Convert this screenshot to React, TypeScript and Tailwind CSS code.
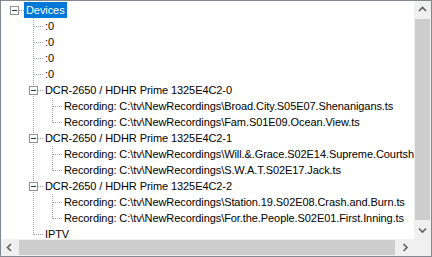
import type { ReactNode } from "react";

type Node = {
  label: string;
  children?: Node[];
  selected?: boolean;
};

const rec = (name: string): Node => ({
  label: "Recording: C:\\tv\\NewRecordings\\" + name,
});

const tree: Node = {
  label: "Devices",
  selected: true,
  children: [
    { label: ":0" },
    { label: ":0" },
    { label: ":0" },
    { label: ":0" },
    {
      label: "DCR-2650 / HDHR Prime 1325E4C2-0",
      children: [
        rec("Broad.City.S05E07.Shenanigans.ts"),
        rec("Fam.S01E09.Ocean.View.ts"),
      ],
    },
    {
      label: "DCR-2650 / HDHR Prime 1325E4C2-1",
      children: [
        rec("Will.&.Grace.S02E14.Supreme.Courtship.ts"),
        rec("S.W.A.T.S02E17.Jack.ts"),
      ],
    },
    {
      label: "DCR-2650 / HDHR Prime 1325E4C2-2",
      children: [
        rec("Station.19.S02E08.Crash.and.Burn.ts"),
        rec("For.the.People.S02E01.First.Inning.ts"),
      ],
    },
    { label: "IPTV" },
  ],
};

type Row = {
  node: Node;
  level: number;
  // for each ancestor column: does a vertical line pass through
  through: boolean[];
  isLast: boolean;
  isRoot: boolean;
};

function flatten(node: Node, level: number, through: boolean[], isLast: boolean, isRoot: boolean, out: Row[]) {
  out.push({ node, level, through, isLast, isRoot });
  const kids = node.children ?? [];
  kids.forEach((kid, i) => {
    flatten(kid, level + 1, [...through, !isLast && !isRoot], i === kids.length - 1, false, out);
  });
  return out;
}

const rows = flatten(tree, 0, [], true, true, []);

const dot = { stroke: "#a0a0a0", strokeWidth: 1, strokeDasharray: "1 1", shapeRendering: "crispEdges" as const };

// one 19x16 column of connector lines
function Cell({ kind, hasBox }: { kind: "blank" | "through" | "tee" | "elbow" | "root"; hasBox?: boolean }) {
  let lines: ReactNode = null;
  if (kind === "through") {
    lines = <line x1={9.5} y1={0} x2={9.5} y2={16} {...dot} />;
  } else if (kind === "tee" || kind === "elbow" || kind === "root") {
    lines = (
      <>
        {kind !== "root" && (
          <line x1={9.5} y1={0} x2={9.5} y2={kind === "tee" ? 16 : 9} {...dot} />
        )}
        <line x1={hasBox ? 14 : 10} y1={8.5} x2={19} y2={8.5} {...dot} />
      </>
    );
  }
  return (
    <svg width="19" height="16" viewBox="0 0 19 16" className="shrink-0 block">
      {lines}
      {hasBox && (
        <>
          <rect x={5.5} y={4.5} width={8} height={8} fill="#fff" stroke="#919191" shapeRendering="crispEdges" />
          <line x1={7} y1={8.5} x2={12} y2={8.5} stroke="#1f3a5a" strokeWidth={1} shapeRendering="crispEdges" />
        </>
      )}
    </svg>
  );
}

function TreeRow({ row }: { row: Row }) {
  const hasKids = !!row.node.children?.length;
  const own = row.isRoot ? "root" : row.isLast ? "elbow" : "tee";
  return (
    <div className="flex h-4 items-center whitespace-nowrap">
      {row.through.map((t, i) => (
        <Cell key={i} kind={t ? "through" : "blank"} />
      ))}
      <Cell kind={own} hasBox={hasKids} />
      <span
        className={
          row.node.selected
            ? "h-4 px-[2px] leading-4 bg-[#0078d7] text-white"
            : "h-4 px-[2px] leading-4 text-black"
        }
      >
        {row.node.label}
      </span>
    </div>
  );
}

function Chevron({ dir }: { dir: "up" | "down" | "left" | "right" }) {
  const paths = {
    up: "M1 5 L4.5 1.5 L8 5",
    down: "M1 1.5 L4.5 5 L8 1.5",
    left: "M5 1 L1.5 4.5 L5 8",
    right: "M1.5 1 L5 4.5 L1.5 8",
  };
  const vertical = dir === "up" || dir === "down";
  return (
    <svg
      width={vertical ? 9 : 7}
      height={vertical ? 7 : 9}
      viewBox={vertical ? "0 0 9 7" : "0 0 7 9"}
      className="block"
    >
      <path d={paths[dir]} fill="none" stroke="#606060" strokeWidth={1.6} />
    </svg>
  );
}

export default function App() {
  return (
    <div
      className="w-[432px] h-[257px] border border-[#828790] bg-white flex flex-col overflow-hidden text-[11px] tracking-[-0.08px] select-none"
      style={{ fontFamily: '"Liberation Sans", Arial, sans-serif' }}
    >
      <div className="flex flex-1 min-h-0">
        <div className="flex-1 min-w-0 overflow-hidden pt-px pl-1">
          {rows.map((r, i) => (
            <TreeRow key={i} row={r} />
          ))}
        </div>
        <div className="w-[17px] shrink-0 flex flex-col bg-[#f0f0f0]">
          <div className="h-[17px] flex items-center justify-center">
            <Chevron dir="up" />
          </div>
          <div className="flex-1 pb-[2px] pt-px">
            <div className="h-full mx-px bg-[#cdcdcd]" />
          </div>
          <div className="h-[17px] flex items-center justify-center">
            <Chevron dir="down" />
          </div>
        </div>
      </div>
      <div className="h-[17px] shrink-0 flex bg-[#f0f0f0]">
        <div className="w-[17px] flex items-center justify-center">
          <Chevron dir="left" />
        </div>
        <div className="flex-1 py-px pl-px pr-[2px]">
          <div className="h-full bg-[#cdcdcd]" />
        </div>
        <div className="w-[17px] flex items-center justify-center">
          <Chevron dir="right" />
        </div>
        <div className="w-[17px] bg-[#f0f0f0]" />
      </div>
    </div>
  );
}
